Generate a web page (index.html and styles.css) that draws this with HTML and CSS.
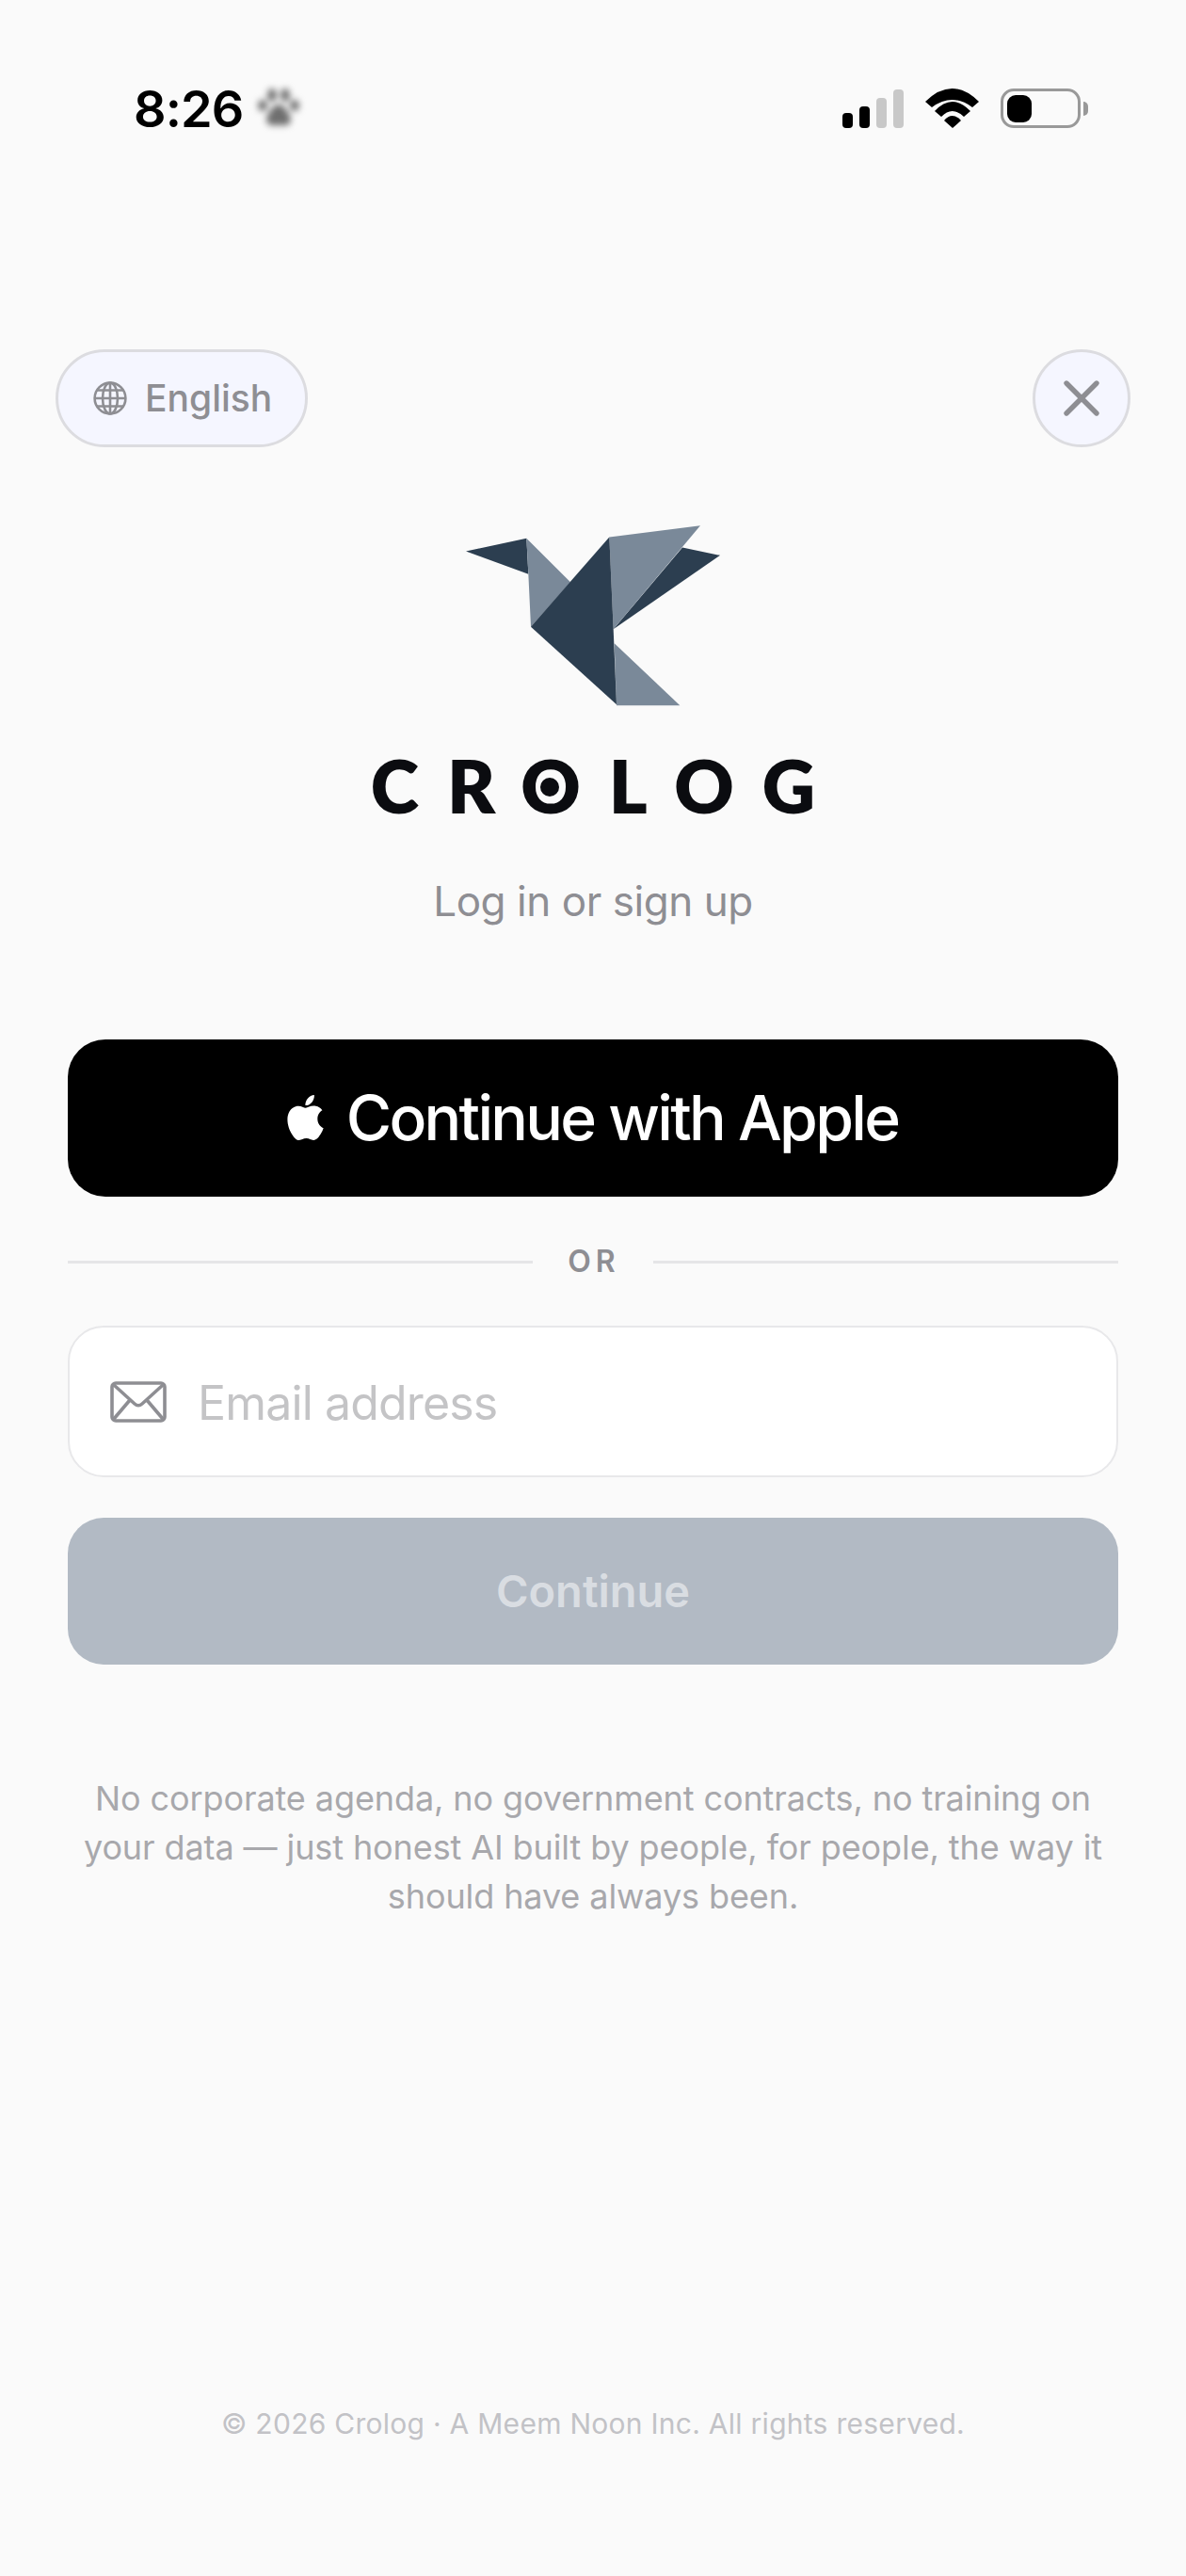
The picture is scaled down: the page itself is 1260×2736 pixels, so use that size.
FILE: index.html
```html
<!DOCTYPE html>
<html lang="en">
<head>
<meta charset="utf-8">
<title>Crolog</title>
<link rel="stylesheet" href="styles.css">
</head>
<body>
<main class="screen">
  <header class="status">
    <div class="status-left">
      <span class="time">8:26</span>
      <svg class="paw" width="46" height="46" viewBox="0 0 46 46"><g fill="#6f6f6f"><ellipse cx="6" cy="20" rx="5" ry="6"/><ellipse cx="16" cy="9" rx="5" ry="7"/><ellipse cx="30" cy="9" rx="5" ry="7"/><ellipse cx="40" cy="20" rx="5" ry="6"/><path d="M23 19c-5 0-8 5-11 10-3 4-3 12 4 12h14c7 0 7-8 4-12-3-5-6-10-11-10z"/></g></svg>
    </div>
    <div class="status-right">
      <div class="bars">
        <span class="bar bar1"></span><span class="bar bar2"></span><span class="bar bar3"></span><span class="bar bar4"></span>
      </div>
      <svg class="wifi" width="57" height="42" viewBox="0 0 57 42"><path d="M0 14Q28.5-14 57 14L50 20Q28.5 4 7 20Z"/><path d="M10 24Q28.5 4 48 24L41 30Q28.5 18 17 30Z"/><path d="M20 34Q28.5 24 38 34L29 42Z"/></svg>
      <div class="battery"><div class="battery-body"><span class="battery-fill"></span></div><span class="battery-cap"></span></div>
    </div>
  </header>

  <div class="topbar">
    <button class="lang">
      <svg width="36" height="36" viewBox="0 0 36 36" fill="none" stroke="#8e8e93" stroke-width="2.6"><circle cx="18" cy="18" r="16.4"/><ellipse cx="18" cy="18" rx="8" ry="16.4"/><path d="M18 1.6v32.8M1.6 18h32.8M4 9.5h28M4 26.5h28"/></svg>
      <span>English</span>
    </button>
    <button class="close" aria-label="Close">
      <svg width="40" height="40" viewBox="0 0 40 40" fill="none" stroke="#8e8e93" stroke-width="5.4" stroke-linecap="round"><path d="M4 4l32 32M36 4L4 36"/></svg>
    </button>
  </div>

  <section class="brand">
    <svg class="bird" width="270" height="192" viewBox="75 55 810 575">
      <g fill="#2c3e50">
        <path d="M75 137L268 96L274 210Z"/>
        <path d="M765 125L885 150L545 385Z"/>
      </g>
      <g fill="#7a8999">
        <path d="M268 96L408 235L282 378L274 210Z"/>
        <path d="M532 92L822 55L545 385Z"/>
        <path d="M548 430L757 628L555 628Z"/>
      </g>
      <path fill="#2c3e50" d="M532 92L545 385L555 625L282 378Z"/>
    </svg>
    <div class="wordmark">CR<span class="ring">O</span>LOG</div>
    <p class="subtitle">Log in or sign up</p>
  </section>

  <section class="actions">
    <button class="apple">
      <svg width="41" height="48" viewBox="1.5 0 21 24" preserveAspectRatio="none"><path fill="#fff" d="M12.152 6.896c-.948 0-2.415-1.078-3.96-1.04-2.04.027-3.91 1.183-4.961 3.014-2.117 3.675-.546 9.103 1.519 12.09 1.013 1.454 2.208 3.09 3.792 3.039 1.52-.065 2.09-.987 3.935-.987 1.831 0 2.35.987 3.96.948 1.637-.026 2.676-1.48 3.676-2.948 1.156-1.688 1.636-3.325 1.662-3.415-.039-.013-3.182-1.221-3.22-4.857-.026-3.04 2.48-4.494 2.597-4.559-1.429-2.09-3.623-2.324-4.39-2.376-2-.156-3.675 1.09-4.61 1.09zM15.53 3.83c.843-1.012 1.4-2.427 1.245-3.83-1.207.052-2.662.805-3.532 1.818-.78.896-1.454 2.338-1.273 3.714 1.338.104 2.715-.688 3.559-1.701"/></svg>
      <span class="apple-label">Continue with Apple</span>
    </button>
    <div class="divider"><span class="rule"></span><span class="or">OR</span><span class="rule"></span></div>
    <div class="email">
      <svg width="60" height="44" viewBox="0 0 60 44" fill="none" stroke="#8e8e93" stroke-width="3.6" stroke-linejoin="round" stroke-linecap="round"><rect x="2" y="2" width="56" height="40" rx="4"/><path d="M4 4l22 20q4 3.500 8 0L56 4M21 20L4 40M39 20l17 20"/></svg>
      <span class="placeholder">Email address</span>
    </div>
    <button class="continue">Continue</button>
  </section>

  <p class="pitch">No corporate agenda, no government contracts, no training on your data — just honest AI built by people, for people, the way it should have always been.</p>

  <footer class="legal">© 2026 Crolog · A Meem Noon Inc. All rights reserved.</footer>
</main>
</body>
</html>
```

FILE: styles.css
```css
* { box-sizing: border-box; }
html, body { margin: 0; padding: 0; }
body { background: #fafafa; font-family: Inter, "Noto Sans", sans-serif; }
button { font-family: inherit; padding: 0; cursor: pointer; }

.screen { width: 1260px; height: 2736px; display: flex; flex-direction: column; overflow: hidden; background: #fafafa; }

.status { display: flex; justify-content: space-between; align-items: center; height: 46px; margin-top: 92px; padding: 0 104px 0 142px; }
.status-left { display: flex; align-items: center; gap: 15px; }
.time { font-size: 54px; line-height: 46px; font-weight: 600; color: #000; letter-spacing: -0.9px; padding-top: 2px; }
.paw { filter: blur(3.5px); }
.status-right { display: flex; align-items: center; }
.bars { display: flex; align-items: flex-end; gap: 7px; height: 42px; margin-right: 23px; }
.bar { width: 11px; border-radius: 4px; background: #000; }
.bar1 { height: 16px; }
.bar2 { height: 23px; }
.bar3 { height: 32px; background: #c8c8c8; }
.bar4 { height: 41px; background: #c8c8c8; }
.wifi { margin-right: 23px; fill: #000; }
.battery { display: flex; align-items: center; gap: 3px; }
.battery-body { width: 85px; height: 42px; border: 3.5px solid #999; border-radius: 14px; padding: 3.500px; }
.battery-fill { display: block; width: 26px; height: 100%; background: #000; border-radius: 9px; }
.battery-cap { width: 5px; height: 15px; background: #999; border-radius: 0 8px 8px 0; }

.topbar { display: flex; justify-content: space-between; margin-top: 233px; padding: 0 59px 0 59px; }
.lang, .close { height: 104px; background: #f5f6ff; border: 3px solid #dcdce0; color: #8e8e93; }
.lang { width: 268px; border-radius: 52px; display: flex; align-items: center; gap: 19px; padding-left: 37px; padding-bottom: 2px; font-size: 39px; font-weight: 500; }
.lang svg { margin-top: 2px; }
.close { width: 104px; border-radius: 50%; display: flex; align-items: center; justify-content: center; }

.brand { display: flex; flex-direction: column; align-items: center; margin-top: 83px; }
.bird { display: block; }
.wordmark { margin-top: 45px; font-family: Lato, sans-serif; font-weight: 800; font-size: 78px; line-height: 78px; letter-spacing: 30px; margin-right: -30px; color: #0b0c10; white-space: nowrap; }
.ring { position: relative; display: inline-block; margin-left: -3px; }
.ring::after { content: ""; position: absolute; width: 20px; height: 20px; border-radius: 50%; background: #0b0c10; left: 21px; top: 31px; }
.subtitle { margin: 57px 0 0; font-size: 44px; line-height: 54px; color: #8e8e93; letter-spacing: -0.45px; }

.actions { display: flex; flex-direction: column; margin-top: 120px; padding: 0 72px; }
.apple { height: 167px; background: #000; border: 0; border-radius: 40px; color: #fff; display: flex; align-items: center; justify-content: center; gap: 23px; font-size: 66px; font-weight: 500; letter-spacing: -2.7px; }
.apple svg { margin-top: -2px; }
.apple-label { margin-top: -2px; margin-right: 2px; }
.divider { display: flex; align-items: center; gap: 38px; margin-top: 47px; }
.rule { flex: 1; height: 3px; background: #e5e5e7; }
.or { font-size: 32px; line-height: 44px; font-weight: 600; color: #8e8e93; letter-spacing: 5px; margin-right: -3px; margin-left: -1px; }
.email { height: 161px; margin-top: 46px; background: #fff; border: 2px solid #e8e8ea; border-radius: 38px; display: flex; align-items: center; gap: 34px; padding-left: 43px; }
.placeholder { font-size: 50px; color: #c4c4c6; letter-spacing: -0.85px; margin-left: -1px; padding-top: 2px; }
.continue { height: 156px; margin-top: 43px; background: #b2bac4; border: 0; border-radius: 38px; color: #d9dde2; font-size: 47px; font-weight: 600; padding-bottom: 2px; }

.pitch { margin: 116px 0 0; padding: 0 72px; text-align: center; font-size: 36px; line-height: 52px; color: #a8a8ac; letter-spacing: -0.1px; }
.legal { margin-top: auto; padding-bottom: 142px; text-align: center; font-size: 30px; line-height: 40px; color: #c2c2c6; letter-spacing: 0.27px; }
```
